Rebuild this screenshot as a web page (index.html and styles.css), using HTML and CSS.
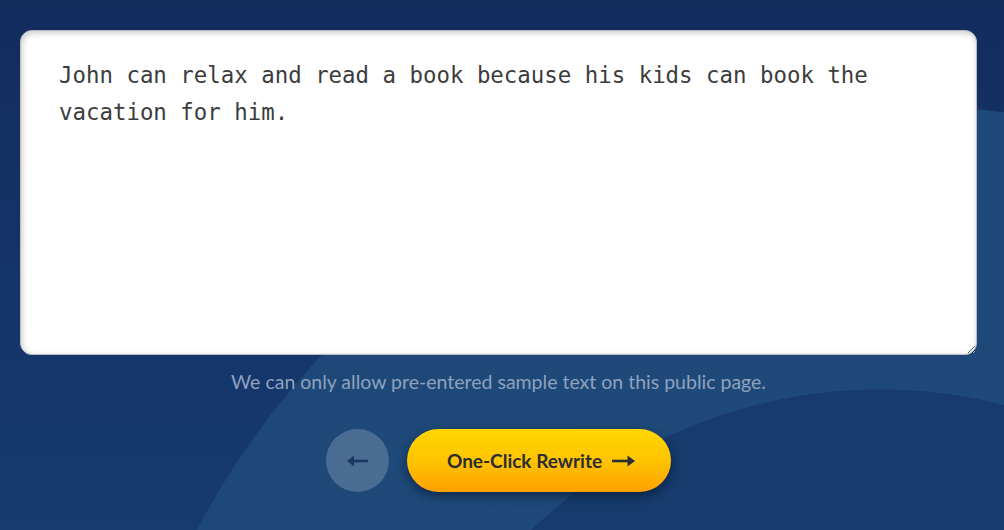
FILE: index.html
```html
<!doctype html>
<html lang="en">
<head>
    <meta charset="UTF-8">
    <title>Rewriter</title>
    <link rel="stylesheet" href="styles.css">
</head>
<body>

<div class="rewriter">
    <textarea class="sample" spellcheck="false">John can relax and read a book because his kids can book the vacation for him.</textarea>
    <p class="note">We can only allow pre-entered sample text on this public page.</p>
    <div class="actions">
        <button class="back" type="button" aria-label="Back">
            <svg width="22" height="12" viewBox="0 0 22 12">
                <path d="M21 6H4" stroke="#1c3862" stroke-width="2.6" fill="none"/>
                <path d="M0 6L7 0.5V11.5Z" fill="#1c3862"/>
            </svg>
        </button>
        <button class="rewrite" type="button">
            One-Click Rewrite
            <svg width="23" height="12" viewBox="0 0 23 12">
                <path d="M0 6H17" stroke="#2b2d33" stroke-width="2.6" fill="none"/>
                <path d="M23 6L15.5 0.5V11.5Z" fill="#2b2d33"/>
            </svg>
        </button>
    </div>
</div>

</body>
</html>
```

FILE: styles.css
```css
html, body {
    height: 100%;
}

body {
    margin: 0;
    padding: 30px 27px 0 20px;
    box-sizing: border-box;
    overflow: hidden;
    background:
        radial-gradient(circle at 880px 893px, #173c6e 0, #163b6c 503px, transparent 504px),
        radial-gradient(circle at 900px 900px, #1f4a7b 0, #1e4877 794px, transparent 795px),
        linear-gradient(180deg, #142c5e 0, #15356a 60%, #163b6d 100%);
    font-family: Lato, "Noto Sans", sans-serif;
}

.rewriter {
    display: flex;
    flex-direction: column;
    align-items: center;
}

.sample {
    display: block;
    width: 100%;
    height: 325px;
    box-sizing: border-box;
    margin: 0;
    padding: 26px 40px 20px 38px;
    border: 1px solid #b9bcc2;
    border-radius: 12px;
    background: #fff;
    box-shadow: inset 1px 2px 6px rgba(0, 0, 0, 0.22);
    font-family: "DejaVu Sans Mono", monospace;
    font-size: 22.4px;
    line-height: 37px;
    color: #3c3c3c;
    outline: none;
}

.note {
    margin: 15px 0 0;
    font-size: 19.5px;
    line-height: 24px;
    color: #8ea2bf;
}

.actions {
    display: flex;
    align-items: center;
    gap: 18px;
    margin-top: 35px;
}

.back {
    width: 63px;
    height: 63px;
    border: none;
    border-radius: 50%;
    background: rgba(255, 255, 255, 0.2);
    display: flex;
    align-items: center;
    justify-content: center;
    padding: 0;
}

.rewrite {
    width: 264px;
    height: 63px;
    border: none;
    border-radius: 32px;
    background: linear-gradient(180deg, #ffd600 0, #ffc400 50%, #ffa000 100%);
    box-shadow: 0 4px 10px rgba(5, 15, 40, 0.55);
    display: flex;
    align-items: center;
    justify-content: center;
    gap: 10px;
    padding: 0 0 0 4px;
    font-family: Lato, "Noto Sans", sans-serif;
    font-weight: 700;
    font-size: 19px;
    color: #2b2d33;
}
```
